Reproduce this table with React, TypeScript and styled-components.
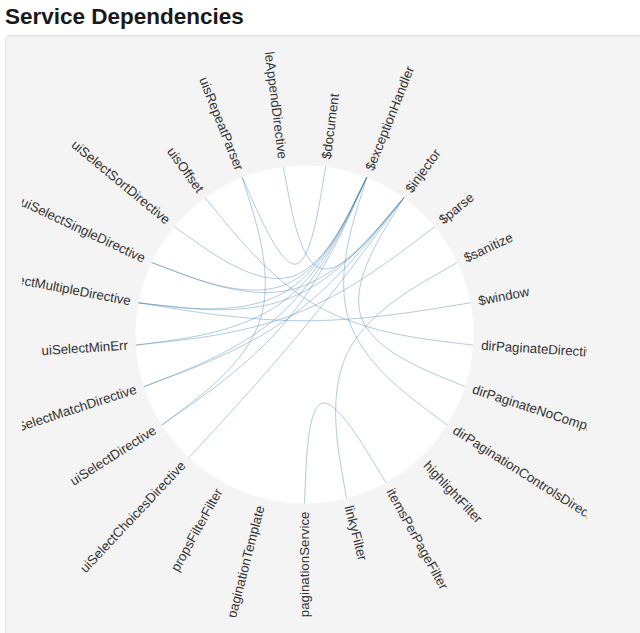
import React from "react";
import styled, { createGlobalStyle } from "styled-components";

const GlobalStyle = createGlobalStyle`
  html, body {
    margin: 0;
    padding: 0;
    overflow: hidden;
    background: #ffffff;
  }
  body {
    font-family: "Liberation Sans", Arial, sans-serif;
    color: #333333;
  }
`;

const Page = styled.div`
  padding-left: 5px;
  width: 900px;
`;

const Title = styled.h2`
  margin: 5px 0 6px 0;
  font-family: "Liberation Sans", Arial, sans-serif;
  font-size: 22.5px;
  line-height: 24px;
  font-weight: bold;
  color: #1a1a1a;
`;

const Panel = styled.div`
  width: 760px;
  height: 660px;
  padding: 16px;
  background: #f4f4f4;
  border: 1px solid #e3e3e3;
  border-radius: 4px;
  box-shadow: inset 0 1px 1px rgba(0, 0, 0, 0.05);
`;

const Chart = styled.svg`
  display: block;
  overflow: hidden;
`;

const Disk = styled.circle`
  fill: #ffffff;
`;

const Link = styled.path`
  fill: none;
  stroke: steelblue;
  stroke-opacity: 0.42;
  stroke-width: 1px;
`;

const Label = styled.text<{ $end: boolean }>`
  font-family: "Liberation Sans", Arial, sans-serif;
  font-size: 13.3px;
  fill: #333333;
  text-anchor: ${(p) => (p.$end ? "end" : "start")};
`;

const NAMES = [
  "$document",
  "$exceptionHandler",
  "$injector",
  "$parse",
  "$sanitize",
  "$window",
  "dirPaginateDirective",
  "dirPaginateNoCompileDirective",
  "dirPaginationControlsDirective",
  "highlightFilter",
  "itemsPerPageFilter",
  "linkyFilter",
  "paginationService",
  "paginationTemplate",
  "propsFilterFilter",
  "uiSelectChoicesDirective",
  "uiSelectDirective",
  "uiSelectMatchDirective",
  "uiSelectMinErr",
  "uiSelectMultipleDirective",
  "uiSelectSingleDirective",
  "uiSelectSortDirective",
  "uisOffset",
  "uisRepeatParser",
  "uisToggleAppendDirective",
];

const LINKS: [number, number][] = [
  [10, 12],
  [11, 4],
  [5, 19],
  [3, 18],
  [23, 0],
  [24, 2],
  [23, 16],
  [22, 6],
  [21, 1],
  [20, 1],
  [20, 2],
  [19, 2],
  [19, 1],
  [18, 1],
  [17, 2],
  [17, 1],
  [16, 1],
  [15, 2],
  [1, 8],
  [2, 7],
];

const SIZE = 565;
const R = 169;
const STEP = 360 / NAMES.length;

type Pt = [number, number];

const angleOf = (i: number) => STEP / 2 + STEP * i;

const pos = (i: number): Pt => {
  const a = (angleOf(i) * Math.PI) / 180;
  return [R * Math.sin(a), -R * Math.cos(a)];
};

const f = (n: number) => n.toFixed(2);

function bundlePath(a: Pt, b: Pt, beta = 0.85): string {
  const raw: Pt[] = [a, [0, 0], b];
  const dx = b[0] - a[0];
  const dy = b[1] - a[1];
  const p = raw.map((q, i): Pt => {
    const t = i / 2;
    return [
      beta * q[0] + (1 - beta) * (a[0] + t * dx),
      beta * q[1] + (1 - beta) * (a[1] + t * dy),
    ];
  });
  const [p0, p1, p2] = p;
  const mix = (w0: number, w1: number, w2: number, d: number): string =>
    `${f((w0 * p0[0] + w1 * p1[0] + w2 * p2[0]) / d)},${f(
      (w0 * p0[1] + w1 * p1[1] + w2 * p2[1]) / d
    )}`;
  return [
    `M${mix(1, 0, 0, 1)}`,
    `L${mix(5, 1, 0, 6)}`,
    `C${mix(2, 1, 0, 3)} ${mix(1, 2, 0, 3)} ${mix(1, 4, 1, 6)}`,
    `C${mix(0, 2, 1, 3)} ${mix(0, 1, 2, 3)} ${mix(0, 1, 5, 6)}`,
    `L${mix(0, 0, 1, 1)}`,
  ].join("");
}

export default function App() {
  const half = SIZE / 2;
  return (
    <>
      <GlobalStyle />
      <Page>
        <Title>Service Dependencies</Title>
        <Panel>
          <Chart
            width={SIZE}
            height={SIZE}
            viewBox={`${-half} ${-half} ${SIZE} ${SIZE}`}
          >
            <Disk r={R} />
            {LINKS.map(([s, t], k) => (
              <Link key={k} d={bundlePath(pos(s), pos(t))} />
            ))}
            {NAMES.map((name, i) => {
              const x = angleOf(i);
              const end = x >= 180;
              return (
                <Label
                  key={name}
                  $end={end}
                  dy=".31em"
                  transform={`rotate(${x - 90}) translate(${R + 8},0)${
                    end ? " rotate(180)" : ""
                  }`}
                >
                  {name}
                </Label>
              );
            })}
          </Chart>
        </Panel>
      </Page>
    </>
  );
}
